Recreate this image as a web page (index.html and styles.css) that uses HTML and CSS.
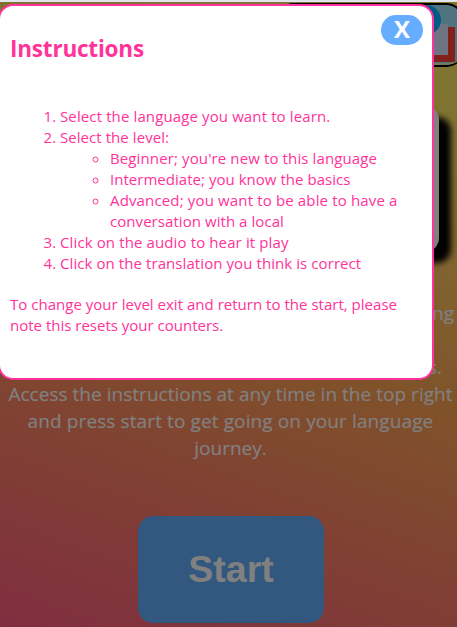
FILE: index.html
```html
<!DOCTYPE html>
<html lang="en">
<head>
<meta charset="utf-8">
<title>Language practice</title>
<link rel="stylesheet" href="styles.css">
</head>
<body>
<main class="page">
  <header class="header">
    <svg class="flag" width="190" height="68" viewBox="0 0 190 68">
      <rect x="1" y="2" width="188" height="62" rx="18" fill="#50747f" stroke="#000" stroke-width="2"/>
      <path d="M150 22H173V54H150Z" fill="#6f7483"/>
      <path d="M173 25H180V60H150V53H173Z" fill="#80221b"/>
      <circle cx="151" cy="18" r="15" fill="#005b87"/>
      <path d="M150 62H172Q180 62 185 57" fill="none" stroke="#918344" stroke-width="1"/>
    </svg>
  </header>
  <div class="card"></div>
  <div class="intro">
    <p class="end first">ng</p>
    <p class="end third">s.</p>
    <p class="l1">Access the instructions at any time in the top right</p>
    <p class="l2">and press start to get going on your language</p>
    <p class="l3">journey.</p>
  </div>
  <button class="start">Start</button>
</main>
<section class="modal">
  <div class="modal-head"><h1>Instructions</h1><button class="close"><span>X</span></button></div>
  <ol>
    <li><span class="a1">Select the language you want to learn.</span></li>
    <li><span class="a2">Select the level:</span>
      <ul>
        <li><span class="a1">Beginner; you're new to this language</span></li>
        <li><span class="a4">Intermediate; you know the basics</span></li>
        <li><span class="a5">Advanced; you want to be able to have a</span><br><span class="a6">conversation with a local</span></li>
      </ul>
    </li>
    <li><span class="a1">Click on the audio to hear it play</span></li>
    <li><span class="a8">Click on the translation you think is correct</span></li>
  </ol>
  <p class="note"><span class="a9">To change your level exit and return to the start, please</span><br>note this resets your counters.</p>
</section>
</body>
</html>
```
FILE: styles.css
```css
* { box-sizing: border-box; }
body {
  margin: 0; height: 627px; overflow: hidden; position: relative;
  font: 15px/21px "Open Sans", "Noto Sans", sans-serif;
  border-top: 2px solid #e1e5ec;
}
p, h1, ol, ul { margin: 0; }
button { border: 0; padding: 0; }
.page {
  height: 625px; overflow: hidden;
  background: linear-gradient(200deg, #807632 0%, #807232 20%, #80522a 52%, #803f34 76%, #802e40 100%);
  display: flex; flex-direction: column;
}
.header { height: 104px; flex: none; display: flex; padding-left: 275px; }
.flag { flex: none; }
.card {
  width: 421px; height: 146px; flex: none; margin-left: 18px;
  background: #808080; border-radius: 14px; box-shadow: 12px 11px 6px #000;
}
.intro {
  margin-top: 48px; height: 162px; flex: none; white-space: nowrap;
  font-size: 19px; line-height: 27px; color: #808080; text-align: center; padding-left: 4px;
  -webkit-text-stroke: 0.2px #808080;
}
.end { text-align: right; height: 27px; }
.first { padding-right: 3px; }
.third { margin-top: 27px; padding-right: 15px; }
.l1 { letter-spacing: 0.03px; }
.l2 { letter-spacing: 0.11px; }
.start {
  width: 186px; height: 107px; flex: none; margin: 54px 0 0 138px; border-radius: 15px;
  background: #33587f; color: #808080; font: bold 37.600px "Liberation Sans", sans-serif;
}
.modal {
  position: absolute; left: -2px; top: 2px; width: 436px; height: 376px;
  background: #fff; border: 2px solid #ff3399; border-radius: 15px;
  color: #ff3399; padding: 9px 9px 0 10px; white-space: nowrap;
}
.modal-head { display: flex; justify-content: space-between; height: 91px; }
h1 { font-size: 22.500px; line-height: 30px; font-weight: 700; padding-top: 19px; letter-spacing: -0.2px; }
.close {
  width: 42px; height: 30px; border-radius: 15px; background: #66adff; color: #fff;
  font: bold 24px/28px "Open Sans", sans-serif;
}
.close span { display: block; height: 30px; }
ol { padding-left: 50px; }
ul { padding-left: 50px; list-style: circle; }
.note { margin-top: 20px; }
.a1 { letter-spacing: 0.12px; }
.a2 { letter-spacing: 0.06px; }
.a4 { letter-spacing: 0.03px; }
.a5 { letter-spacing: 0.15px; }
.a6 { letter-spacing: 0.06px; }
.a8 { letter-spacing: 0.08px; }
.a9 { letter-spacing: 0.02px; }
```
